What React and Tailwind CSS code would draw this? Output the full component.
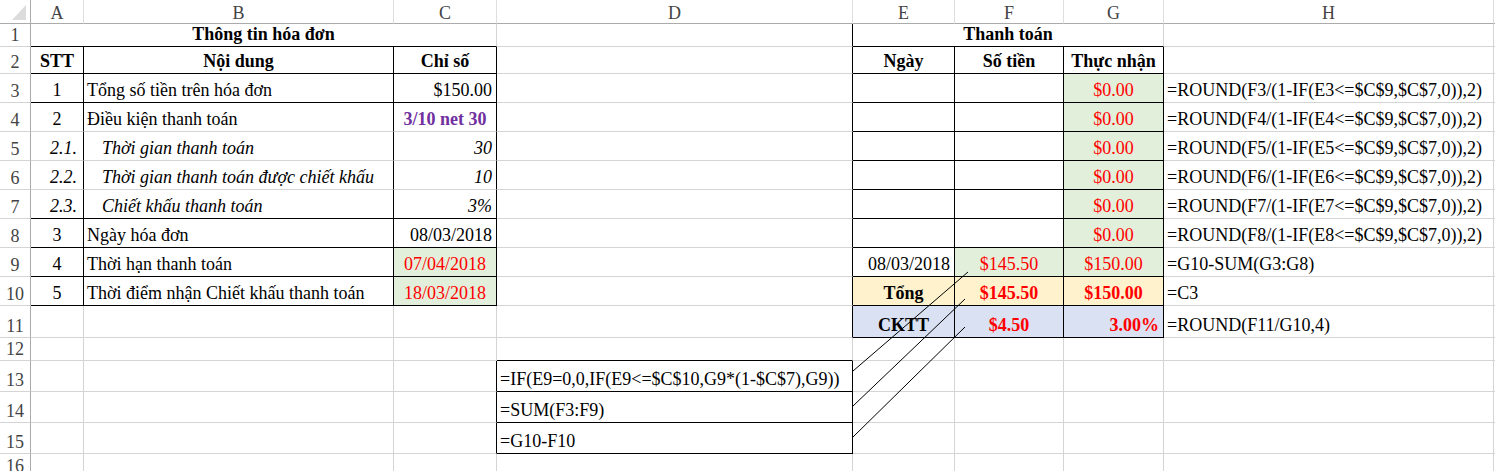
import clsx from "clsx"

const RED = "text-[#ff0000]"

// one row per sheet row; each entry is a cell from column A to the spare column after H
const rows = [
  [
    { t: "Thông tin hóa đơn", span: 3, a: "c", b: 1, bb: 1 },
    { rb: 1 },
    { t: "Thanh toán", span: 3, a: "c", b: 1, bb: 1 },
    {},
    {},
  ],
  [
    { t: "STT", a: "c", b: 1, rb: 1, bb: 1 },
    { t: "Nội dung", a: "c", b: 1, rb: 1, bb: 1 },
    { t: "Chỉ số", a: "c", b: 1, rb: 1, bb: 1 },
    { rb: 1 },
    { t: "Ngày", a: "c", b: 1, rb: 1, bb: 1 },
    { t: "Số tiền", a: "c", b: 1, rb: 1, bb: 1 },
    { t: "Thực nhận", a: "c", b: 1, rb: 1, bb: 1 },
    {},
    {},
  ],
  [
    { t: "1", a: "c", rb: 1, bb: 1 },
    { t: "Tổng số tiền trên hóa đơn", rb: 1, bb: 1 },
    { t: "$150.00", a: "r", rb: 1, bb: 1 },
    { rb: 1 },
    { rb: 1, bb: 1 },
    { rb: 1, bb: 1 },
    { t: "$0.00", a: "c", red: 1, bg: "g", rb: 1, bb: 1 },
    { t: "=ROUND(F3/(1-IF(E3<=$C$9,$C$7,0)),2)" },
    {},
  ],
  [
    { t: "2", a: "c", rb: 1 },
    { t: "Điều kiện thanh toán", rb: 1 },
    { t: "3/10 net 30", a: "c", b: 1, purple: 1, rb: 1 },
    { rb: 1 },
    { rb: 1, bb: 1 },
    { rb: 1, bb: 1 },
    { t: "$0.00", a: "c", red: 1, bg: "g", rb: 1, bb: 1 },
    { t: "=ROUND(F4/(1-IF(E4<=$C$9,$C$7,0)),2)" },
    {},
  ],
  [
    { t: "2.1.", a: "r", i: 1, rb: 1, wide: 1 },
    { t: "Thời gian thanh toán", i: 1, ind: 1, rb: 1 },
    { t: "30", a: "r", i: 1, rb: 1 },
    { rb: 1 },
    { rb: 1, bb: 1 },
    { rb: 1, bb: 1 },
    { t: "$0.00", a: "c", red: 1, bg: "g", rb: 1, bb: 1 },
    { t: "=ROUND(F5/(1-IF(E5<=$C$9,$C$7,0)),2)" },
    {},
  ],
  [
    { t: "2.2.", a: "r", i: 1, rb: 1, wide: 1 },
    { t: "Thời gian thanh toán được chiết khấu", i: 1, ind: 1, rb: 1 },
    { t: "10", a: "r", i: 1, rb: 1 },
    { rb: 1 },
    { rb: 1, bb: 1 },
    { rb: 1, bb: 1 },
    { t: "$0.00", a: "c", red: 1, bg: "g", rb: 1, bb: 1 },
    { t: "=ROUND(F6/(1-IF(E6<=$C$9,$C$7,0)),2)" },
    {},
  ],
  [
    { t: "2.3.", a: "r", i: 1, rb: 1, bb: 1, wide: 1 },
    { t: "Chiết khấu thanh toán", i: 1, ind: 1, rb: 1, bb: 1 },
    { t: "3%", a: "r", i: 1, rb: 1, bb: 1 },
    { rb: 1 },
    { rb: 1, bb: 1 },
    { rb: 1, bb: 1 },
    { t: "$0.00", a: "c", red: 1, bg: "g", rb: 1, bb: 1 },
    { t: "=ROUND(F7/(1-IF(E7<=$C$9,$C$7,0)),2)" },
    {},
  ],
  [
    { t: "3", a: "c", rb: 1, bb: 1 },
    { t: "Ngày hóa đơn", rb: 1, bb: 1 },
    { t: "08/03/2018", a: "r", rb: 1, bb: 1 },
    { rb: 1 },
    { rb: 1, bb: 1 },
    { rb: 1, bb: 1 },
    { t: "$0.00", a: "c", red: 1, bg: "g", rb: 1, bb: 1 },
    { t: "=ROUND(F8/(1-IF(E8<=$C$9,$C$7,0)),2)" },
    {},
  ],
  [
    { t: "4", a: "c", rb: 1, bb: 1 },
    { t: "Thời hạn thanh toán", rb: 1, bb: 1 },
    { t: "07/04/2018", a: "c", red: 1, bg: "g", rb: 1, bb: 1 },
    { rb: 1 },
    { t: "08/03/2018", a: "r", rb: 1, bb: 1 },
    { t: "$145.50", a: "c", red: 1, bg: "g", rb: 1, bb: 1 },
    { t: "$150.00", a: "c", red: 1, bg: "g", rb: 1, bb: 1 },
    { t: "=G10-SUM(G3:G8)" },
    {},
  ],
  [
    { t: "5", a: "c", rb: 1, bb: 1 },
    { t: "Thời điểm nhận Chiết khấu thanh toán", rb: 1, bb: 1 },
    { t: "18/03/2018", a: "c", red: 1, bg: "g", rb: 1, bb: 1 },
    { rb: 1 },
    { t: "Tổng", a: "c", b: 1, bg: "y", rb: 1, bb: 1 },
    { t: "$145.50", a: "c", b: 1, red: 1, bg: "y", rb: 1, bb: 1 },
    { t: "$150.00", a: "c", b: 1, red: 1, bg: "y", rb: 1, bb: 1 },
    { t: "=C3" },
    {},
  ],
  [
    {},
    {},
    {},
    { rb: 1 },
    { t: "CKTT", a: "c", b: 1, bg: "b", rb: 1, bb: 1 },
    { t: "$4.50", a: "c", b: 1, red: 1, bg: "b", rb: 1, bb: 1 },
    { t: "3.00%", a: "r", b: 1, red: 1, bg: "b", rb: 1, bb: 1 },
    { t: "=ROUND(F11/G10,4)" },
    {},
  ],
  [{}, {}, {}, { bb: 1 }, {}, {}, {}, {}, {}],
  [
    {},
    {},
    { rb: 1 },
    { t: "=IF(E9=0,0,IF(E9<=$C$10,G9*(1-$C$7),G9))", rb: 1, bb: 1 },
    {},
    {},
    {},
    {},
    {},
  ],
  [{}, {}, { rb: 1 }, { t: "=SUM(F3:F9)", rb: 1, bb: 1 }, {}, {}, {}, {}, {}],
  [{}, {}, { rb: 1 }, { t: "=G10-F10", rb: 1, bb: 1 }, {}, {}, {}, {}, {}],
  [{}, {}, {}, {}, {}, {}, {}, {}, {}],
]

const letters = ["A", "B", "C", "D", "E", "F", "G", "H", ""]

function Cell({ c }) {
  return (
    <div
      className={clsx(
        "flex items-end pb-[2px] border-r border-b whitespace-nowrap overflow-visible",
        c.span === 3 && "col-span-3",
        c.rb ? "border-r-black" : "border-r-[#d4d4d4]",
        c.bb ? "border-b-black" : "border-b-[#d4d4d4]",
        c.a === "c" && "justify-center",
        c.a === "r" && (c.wide ? "justify-end pr-[6px]" : "justify-end pr-[4px]"),
        !c.a && (c.ind ? "pl-[18px]" : "pl-[3px]"),
        c.b && "font-bold",
        c.i && "italic",
        c.red && RED,
        c.purple && "text-[#7030a0]",
        c.bg === "g" && "bg-[#e2efda]",
        c.bg === "y" && "bg-[#fff2cc]",
        c.bg === "b" && "bg-[#d9e1f2]"
      )}
    >
      {c.t}
    </div>
  )
}

export default function App() {
  return (
    <div className="relative w-full h-[471px] overflow-hidden bg-white font-['Liberation_Serif',serif] text-[18px] leading-[20px] text-black">
      <div className="grid grid-cols-[31px_53px_310px_103px_356px_102px_109px_100px_330px_1fr] grid-rows-[24px_23px_27px_29px_29px_29px_29px_29px_29px_29px_29px_32px_23px_31px_31px_31px_24px]">
        {/* select-all corner */}
        <div className="border-r border-b border-r-[#ababab] border-b-[#ababab]">
          <svg width="30" height="23" viewBox="0 0 30 23">
            <polygon points="26,5 26,20 12,20" fill="#dcdcdc" />
          </svg>
        </div>
        {letters.map((l, i) => (
          <div
            key={"h" + i}
            className="flex items-end justify-center border-r border-b border-r-[#dedede] border-b-[#ababab] text-[#444]"
          >
            {l}
          </div>
        ))}

        {rows.map((row, r) => [
          <div
            key={"n" + r}
            className="flex items-end justify-center pb-[1px] border-r border-b border-r-[#ababab] border-b-[#d4d4d4] text-[#444]"
          >
            {r + 1}
          </div>,
          ...row.map((c, k) => <Cell key={r + "-" + k} c={c} />),
        ])}
      </div>

      {/* arrows from the formula notes to the cells they describe */}
      <svg className="absolute inset-0 w-full h-full pointer-events-none" viewBox="0 0 1495 471">
        <line x1="853" y1="371" x2="968" y2="272" stroke="#000" strokeWidth="1" />
        <line x1="853" y1="406" x2="965" y2="299" stroke="#000" strokeWidth="1" />
        <line x1="853" y1="437" x2="965" y2="327" stroke="#000" strokeWidth="1" />
      </svg>
    </div>
  )
}
